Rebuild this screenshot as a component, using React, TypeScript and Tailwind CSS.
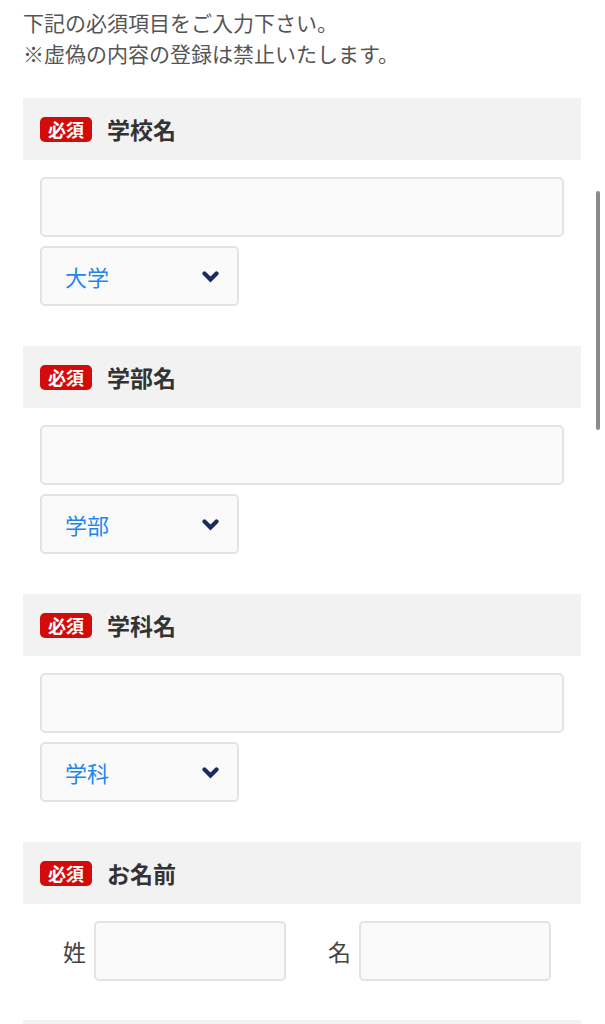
import React from 'react';

const FONT = { fontFamily: '"Noto Sans CJK JP", "Noto Sans", sans-serif' };

const Badge: React.FC = () => (
  <span className="inline-flex items-center justify-center h-[25px] w-[52px] rounded-[5px] bg-[#d30b0b] text-white text-[18px] font-bold leading-none">
    必須
  </span>
);

const SectionHeader: React.FC<{ title: string }> = ({ title }) => (
  <div className="flex items-center h-[62px] bg-[#f2f2f2] pl-[17px] gap-[15px]">
    <Badge />
    <span className="text-[23px] font-bold text-[#333] leading-none">{title}</span>
  </div>
);

const Chevron: React.FC = () => (
  <svg width="17" height="13" viewBox="0 0 17 13" className="shrink-0">
    <polyline
      points="2.5,3.5 8.5,9.5 14.5,3.5"
      fill="none"
      stroke="#1b2b5b"
      strokeWidth="4.2"
      strokeLinecap="round"
      strokeLinejoin="miter"
    />
  </svg>
);

const TextInput: React.FC<{ className?: string }> = ({ className = '' }) => (
  <input
    type="text"
    className={`h-[60px] bg-[#fafafa] border-2 border-[#e3e3e3] rounded-[5px] outline-none ${className}`}
  />
);

const SelectBox: React.FC<{ label: string }> = ({ label }) => (
  <div className="flex items-center justify-between h-[60px] w-[199px] bg-[#fafafa] border-2 border-[#e3e3e3] rounded-[5px] pl-[23px] pr-[18px]">
    <span className="text-[22px] text-[#1e86ee] leading-none">{label}</span>
    <Chevron />
  </div>
);

const SchoolSection: React.FC<{ title: string; option: string }> = ({ title, option }) => (
  <section>
    <SectionHeader title={title} />
    <div className="px-[17px] pt-[17px] pb-[40px] flex flex-col gap-[9px]">
      <TextInput className="w-full" />
      <SelectBox label={option} />
    </div>
  </section>
);

export default function App() {
  return (
    <div className="relative w-[605px] h-[1024px] overflow-hidden bg-white" style={FONT}>
      <div className="pl-[23px] pr-[24px] pt-[7px]">
        <p className="text-[21px] leading-[31px] text-[#555] mb-[29px]">
          下記の必須項目をご入力下さい。
          <br />
          ※虚偽の内容の登録は禁止いたします。
        </p>

        <SchoolSection title="学校名" option="大学" />
        <SchoolSection title="学部名" option="学部" />
        <SchoolSection title="学科名" option="学科" />

        <section>
          <SectionHeader title="お名前" />
          <div className="flex items-center pl-[40px] pt-[17px] pb-[39px]">
            <div className="flex items-center gap-[8px]">
              <span className="text-[23px] text-[#444] leading-none">姓</span>
              <TextInput className="w-[192px]" />
            </div>
            <div className="flex items-center gap-[8px] ml-[42px]">
              <span className="text-[23px] text-[#444] leading-none">名</span>
              <TextInput className="w-[192px]" />
            </div>
          </div>
        </section>

        <div className="h-[62px] bg-[#f2f2f2]" />
      </div>

      {/* overlay scrollbar */}
      <div className="absolute left-[596px] top-[191px] w-[4px] h-[239px] rounded-full bg-[#8b8b8b]" />
    </div>
  );
}
